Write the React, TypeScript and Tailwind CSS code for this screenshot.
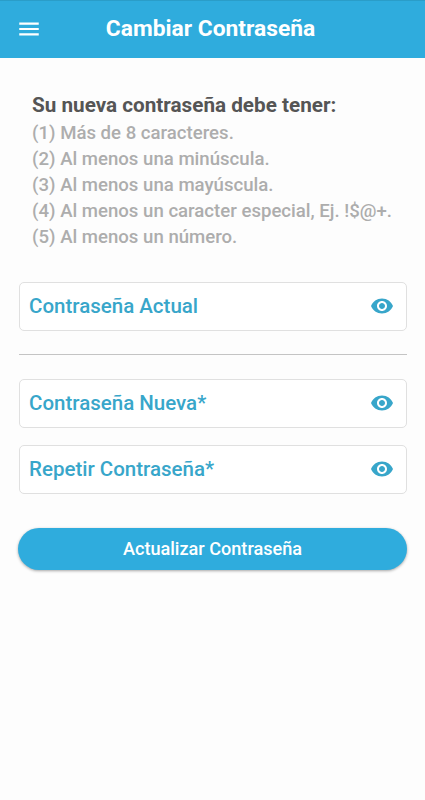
import { useState } from "react";
import { MdMenu, MdVisibility } from "react-icons/md";

const RULES = [
  "(1) Más de 8 caracteres.",
  "(2) Al menos una minúscula.",
  "(3) Al menos una mayúscula.",
  "(4) Al menos un caracter especial, Ej. !$@+.",
  "(5) Al menos un número.",
];

interface PasswordFieldProps {
  label: string;
}

const PasswordField = ({ label }: PasswordFieldProps) => {
  const [visible, setVisible] = useState(false);

  return (
    <div className="flex h-[49px] items-center rounded-[5px] border border-[#e0e0e0] bg-white pl-[9px] pr-3">
      <input
        type={visible ? "text" : "password"}
        placeholder={label}
        aria-label={label}
        className="min-w-0 flex-1 bg-transparent text-[20.5px] font-medium text-[#38a6ca] outline-none placeholder:text-[#38a6ca]"
      />
      <button type="button" aria-label="Mostrar contraseña" className="pb-px" onClick={() => setVisible(!visible)}>
        <MdVisibility className="size-6 text-[#38a6ca]" />
      </button>
    </div>
  );
};

export default function App() {
  return (
    <div className="min-h-screen bg-[#fdfdfd] font-['Roboto',sans-serif]">
      <header className="grid h-[58px] grid-cols-[58px_1fr_62px] items-center border-t border-[#2a9dc8] bg-[#2facdd] pb-px text-white">
        <button type="button" aria-label="Menú" className="flex justify-center">
          <MdMenu className="size-[26px]" />
        </button>
        <h1 className="text-center text-[22.8px] font-bold whitespace-nowrap">Cambiar Contraseña</h1>
      </header>

      <main className="pt-[34px] pr-[18px] pl-[19px]">
        <section className="pl-[13px]">
          <h2 className="text-[20.7px] leading-[26px] font-bold text-[#555555]">Su nueva contraseña debe tener:</h2>
          <ul className="pt-0.5 text-[18.6px] leading-[26px] font-medium text-[#adadad]">
            {RULES.map((rule) => (
              <li key={rule} className="whitespace-nowrap">{rule}</li>
            ))}
          </ul>
        </section>

        <form className="mt-8" onSubmit={(e) => e.preventDefault()}>
          <PasswordField label="Contraseña Actual" />
          <hr className="mt-[23px] mb-6 border-[#c4c4c4]" />
          <div className="flex flex-col gap-[17px]">
            <PasswordField label="Contraseña Nueva*" />
            <PasswordField label="Repetir Contraseña*" />
          </div>
          <button
            type="submit"
            className="mt-[34px] -ml-px flex h-[42px] w-[calc(100%+1px)] items-center justify-center rounded-full bg-[#2facdd] text-[18.1px] font-medium text-white shadow-[0_1px_3px_rgba(0,0,0,0.35)]"
          >
            Actualizar Contraseña
          </button>
        </form>
      </main>
    </div>
  );
}
